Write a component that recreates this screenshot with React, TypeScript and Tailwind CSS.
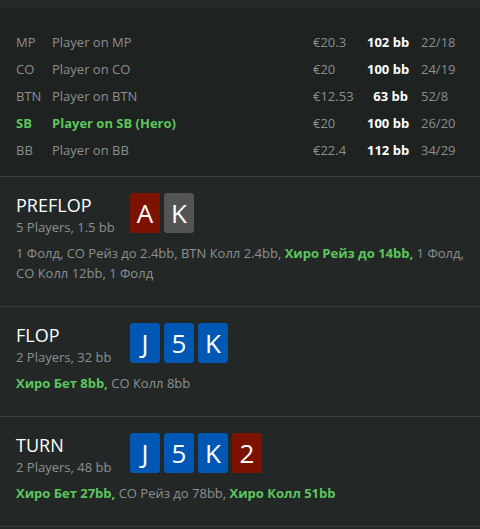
const players = [
  { pos: "MP", name: "Player on MP", amount: "€20.3", bb: "102 bb", ratio: "22/18" },
  { pos: "CO", name: "Player on CO", amount: "€20", bb: "100 bb", ratio: "24/19" },
  { pos: "BTN", name: "Player on BTN", amount: "€12.53", bb: "63 bb", ratio: "52/8" },
  { pos: "SB", name: "Player on SB (Hero)", amount: "€20", bb: "100 bb", ratio: "26/20", hero: true },
  { pos: "BB", name: "Player on BB", amount: "€22.4", bb: "112 bb", ratio: "34/29" },
];

type Card = { rank: string; color: "red" | "gray" | "blue" };
type Action = { text: string; hero?: boolean };

const streets: { title: string; sub: string; cards: Card[]; actions: Action[] }[] = [
  {
    title: "PREFLOP",
    sub: "5 Players, 1.5 bb",
    cards: [
      { rank: "A", color: "red" },
      { rank: "K", color: "gray" },
    ],
    actions: [
      { text: "1 Фолд, CO Рейз до 2.4bb, BTN Колл 2.4bb, " },
      { text: "Хиро Рейз до 14bb,", hero: true },
      { text: " 1 Фолд, CO Колл 12bb, 1 Фолд" },
    ],
  },
  {
    title: "FLOP",
    sub: "2 Players, 32 bb",
    cards: [
      { rank: "J", color: "blue" },
      { rank: "5", color: "blue" },
      { rank: "K", color: "blue" },
    ],
    actions: [
      { text: "Хиро Бет 8bb,", hero: true },
      { text: " CO Колл 8bb" },
    ],
  },
  {
    title: "TURN",
    sub: "2 Players, 48 bb",
    cards: [
      { rank: "J", color: "blue" },
      { rank: "5", color: "blue" },
      { rank: "K", color: "blue" },
      { rank: "2", color: "red" },
    ],
    actions: [
      { text: "Хиро Бет 27bb,", hero: true },
      { text: " CO Рейз до 78bb, " },
      { text: "Хиро Колл 51bb", hero: true },
    ],
  },
];

const cardBg = {
  red: "bg-[#7c1200]",
  gray: "bg-[#545454]",
  blue: "bg-[#0058b4]",
};

function PlayingCard({ card }: { card: Card }) {
  return (
    <div
      className={`flex h-[40px] w-[30px] items-center justify-center rounded-[3px] text-[26px] leading-none text-white ${cardBg[card.color]}`}
    >
      {card.rank}
    </div>
  );
}

export default function App() {
  return (
    <div
      className="min-h-[529px] w-[480px] bg-[#232827] text-[13px]"
      style={{ fontFamily: '"Open Sans", "Noto Sans", sans-serif' }}
    >
      <div className="h-[8px] bg-[#262b2a]" />
      <div className="bg-[#1e2220] px-4 pt-[21px] pb-[12px]">
        {players.map((p) => (
          <div key={p.pos} className="flex h-[27px] items-center">
            <div className={`w-[36px] ${p.hero ? "font-bold text-[#5cc65c]" : "text-[#8b9090]"}`}>{p.pos}</div>
            <div className={`flex-1 ${p.hero ? "font-bold text-[#5cc65c]" : "text-[#8b9090]"}`}>{p.name}</div>
            <div className="w-[54px] text-[#8b9090]">{p.amount}</div>
            <div className="w-[41px] text-right font-bold whitespace-nowrap text-white">{p.bb}</div>
            <div className="ml-[13px] w-[43px] text-[#8b9090]">{p.ratio}</div>
          </div>
        ))}
      </div>
      {streets.map((s) => (
        <section key={s.title} className="border-t border-[#3b3f3e] px-4 pt-[16px] pb-[23px]">
          <div className="flex">
            <div className="w-[114px]">
              <div className="text-[18px] leading-[24px] text-white">{s.title}</div>
              <div className="leading-[20px] text-[#8b9090]">{s.sub}</div>
            </div>
            <div className="flex gap-[4px]">
              {s.cards.map((c, i) => (
                <PlayingCard key={i} card={c} />
              ))}
            </div>
          </div>
          <p className="mt-[6px] leading-[20px] text-[#8b9090]">
            {s.actions.map((a, i) => (
              <span key={i} className={a.hero ? "font-bold text-[#5cc65c]" : ""}>
                {a.text}
              </span>
            ))}
          </p>
        </section>
      ))}
      <div className="border-t border-[#3b3f3e]" />
    </div>
  );
}
